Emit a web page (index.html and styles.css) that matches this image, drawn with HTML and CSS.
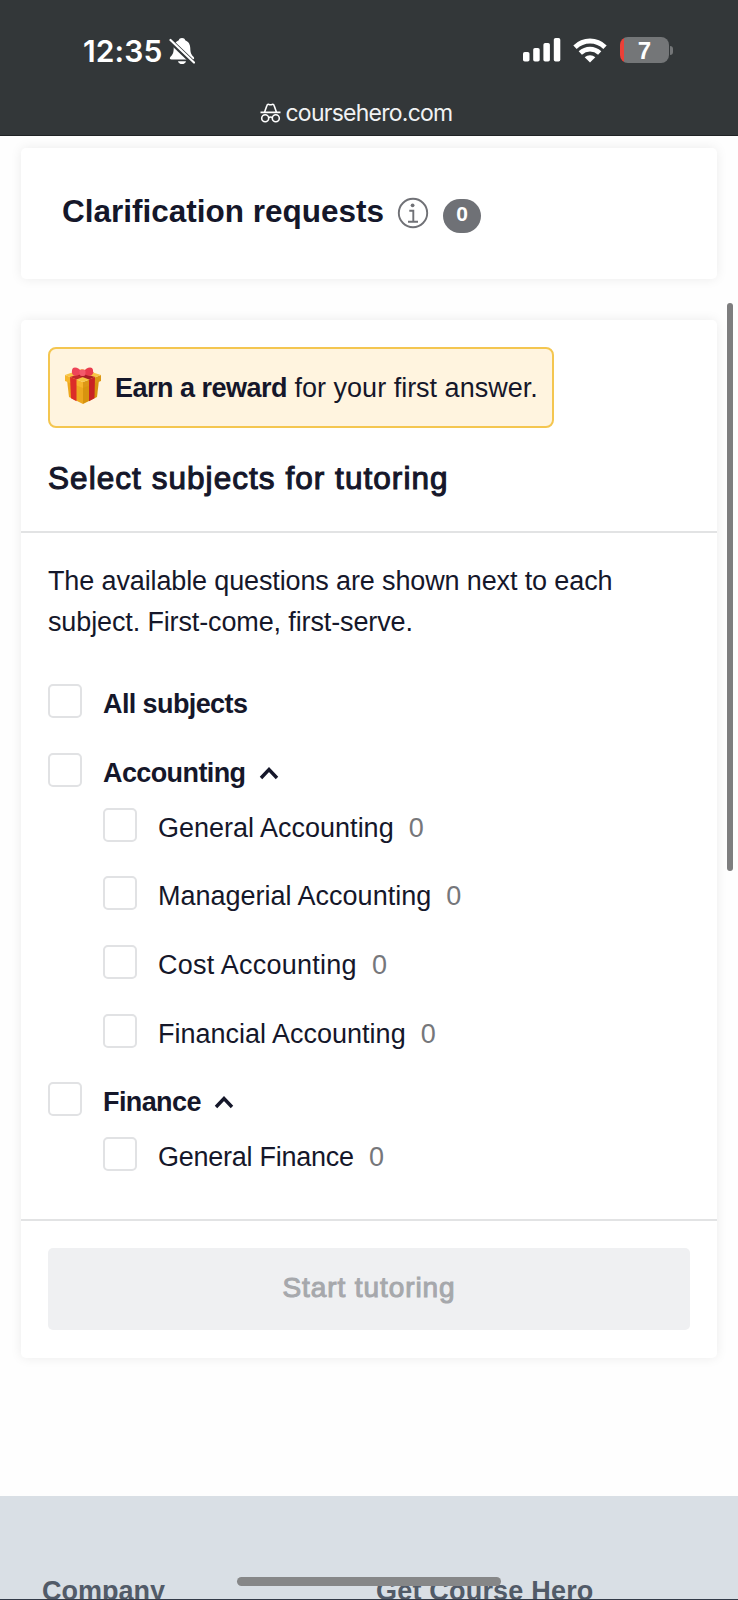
FILE: index.html
```html
<!DOCTYPE html>
<html lang="en">
<head>
    <meta charset="UTF-8">
    <meta name="viewport" content="width=device-width, initial-scale=1.0">
    <title>Course Hero - Tutoring</title>
    <link rel="stylesheet" href="styles.css">
</head>
<body>

<header class="browser-bar">
    <div class="status">
        <div class="status-left">
            <span class="time">12:35</span>
            <svg class="bell" width="26" height="28" viewBox="0 0 26 28">
                <path d="M13 1c-1.700 0-2.900.9-3.200 2.300C6 4.800 4.800 7.800 4.700 11.500c-.1 4.300-1 6-3.200 8.300-1.200 1.300-.7 2.800 1 2.800h21c1.700 0 2.200-1.500 1-2.800-2.200-2.300-3.100-4-3.200-8.300-.1-3.700-1.300-6.700-5.100-8.200C15.900 1.900 14.700 1 13 1z" fill="#fff"/>
                <path d="M9 24.200h8c-.4 1.700-2 2.900-4 2.900s-3.600-1.200-4-2.900z" fill="#fff"/>
                <path d="M1 3.500l24 23" stroke="#333739" stroke-width="5"/>
                <path d="M1.500 3l23.500 22.500" stroke="#fff" stroke-width="2.200" stroke-linecap="round"/>
            </svg>
        </div>
        <div class="status-right">
            <svg width="38" height="24" viewBox="0 0 38 24" fill="#fff">
                <rect x="0" y="14" width="6.500" height="9.500" rx="1.800"/>
                <rect x="10.200" y="10" width="6.500" height="13.500" rx="1.800"/>
                <rect x="20.400" y="5" width="6.500" height="18.500" rx="1.800"/>
                <rect x="30.800" y="0" width="6.500" height="23.500" rx="1.800"/>
            </svg>
            <svg class="wifi" width="34" height="25" viewBox="0 0 34 25">
                <path d="M2 9.200C10.500.9 23.500.9 32 9.200" fill="none" stroke="#fff" stroke-width="4.800"/>
                <path d="M7.300 15C13 9.800 21 9.800 26.700 15" fill="none" stroke="#fff" stroke-width="4.800"/>
                <path d="M17 24.500l-5.300-5.300c3-2.700 7.600-2.700 10.600 0z" fill="#fff"/>
            </svg>
            <div class="battery"><span>7</span></div>
            <div class="battery-tip"></div>
        </div>
    </div>
    <div class="address">
        <svg width="21" height="20" viewBox="0 0 21 20" fill="none" stroke="#fff" stroke-width="1.600">
            <path d="M4.600 9L7 2.300c.3-.9 1-1.200 1.900-.9 1.100.4 2.100.4 3.200 0 .9-.3 1.600 0 1.900.9L16.400 9M.5 9.400h20"/>
            <circle cx="5.200" cy="15.200" r="3.500"/>
            <circle cx="15.800" cy="15.200" r="3.500"/>
            <path d="M8.600 14.600c1.200-.8 2.600-.8 3.800 0"/>
        </svg>
        <span>coursehero.com</span>
    </div>
</header>

<main>
    <section class="card requests">
        <h2>Clarification requests</h2>
        <svg class="info" width="32" height="32" viewBox="0 0 32 32" fill="none" stroke="#707176" stroke-width="1.900">
            <circle cx="16" cy="16" r="14.200"/>
            <path d="M12.300 13.800h4V24.600M11 24.700h10"/>
            <circle cx="15.600" cy="8.300" r="1.900" fill="#707176" stroke="none"/>
        </svg>
        <span class="count">0</span>
    </section>

    <section class="card">
        <div class="card-head">
            <div class="reward">
                <svg width="38" height="40" viewBox="0 0 38 40">
                    <path d="M3 14l16 6v18L5 31z" fill="#eda81f"/>
                    <path d="M35 14l-16 6v18l14-7z" fill="#d8930f"/>
                    <path d="M1 9l18 7v6L1 15z" fill="#f6b52c"/>
                    <path d="M37 9l-18 7v6l18-7z" fill="#dc9716"/>
                    <path d="M1 9l17-6 19 6-18 7z" fill="#f8c544"/>
                    <path d="M6 11l19-6 5 1.800-17.500 6.700z" fill="#c3282b"/>
                    <path d="M31 11L12 5.500 8 7l17 6.500z" fill="#aa1f25"/>
                    <path d="M6 11l6.500 2.500V35.200L7 32.300z" fill="#dc2d28"/>
                    <path d="M31 11l-6 2.500V35.200l5.500-2.900z" fill="#c82424"/>
                    <path d="M18 7c-2-5-7-6.500-9-5-1.500 1.500-1.500 5.500 0 7 2.500 1.500 6 .5 9-2z" fill="#ee4458"/>
                    <path d="M19 7c2-5 7-6.500 9-5 1.500 1.500 1.500 5.500 0 7-2.500 1.500-6 .5-9-2z" fill="#e93a4d"/>
                    <rect x="15.500" y="3.500" width="6" height="6.500" rx="2" fill="#f3596a"/>
                </svg>
                <p><b>Earn a reward</b> for your first answer.</p>
            </div>
            <h3>Select subjects for tutoring</h3>
        </div>

        <div class="card-body">
            <p class="hint">The available questions are shown next to each subject. First-come, first-serve.</p>

            <div class="row">
                <span class="checkbox"></span>
                <b>All subjects</b>
            </div>

            <div class="row group">
                <span class="checkbox"></span>
                <b>Accounting</b>
                <svg class="caret" width="20" height="14" viewBox="0 0 20 14"><path d="M2 12l8-8.500 8 8.500" fill="none" stroke="#15172a" stroke-width="3.400"/></svg>
            </div>
            <div class="row sub">
                <span class="checkbox"></span>
                <span class="label">General Accounting</span>
                <span class="num">0</span>
            </div>
            <div class="row sub">
                <span class="checkbox"></span>
                <span class="label">Managerial Accounting</span>
                <span class="num">0</span>
            </div>
            <div class="row sub">
                <span class="checkbox"></span>
                <span class="label cost">Cost Accounting</span>
                <span class="num">0</span>
            </div>
            <div class="row sub">
                <span class="checkbox"></span>
                <span class="label">Financial Accounting</span>
                <span class="num">0</span>
            </div>

            <div class="row group">
                <span class="checkbox"></span>
                <b>Finance</b>
                <svg class="caret" width="20" height="14" viewBox="0 0 20 14"><path d="M2 12l8-8.500 8 8.500" fill="none" stroke="#15172a" stroke-width="3.400"/></svg>
            </div>
            <div class="row sub">
                <span class="checkbox"></span>
                <span class="label finance">General Finance</span>
                <span class="num">0</span>
            </div>
        </div>

        <div class="card-foot">
            <button class="button" disabled>Start tutoring</button>
        </div>
    </section>
</main>

<footer>
    <div>Company</div>
    <div class="get">Get Course Hero</div>
</footer>

<div class="scrollbar"></div>
<div class="home-indicator"></div>

</body>
</html>
```

FILE: styles.css
```css
* {
    margin: 0;
    padding: 0;
    box-sizing: border-box;
}

body {
    position: relative;
    width: 738px;
    height: 1600px;
    overflow: hidden;
    background: #fefefe;
    color: #15172a;
    font-family: "Liberation Sans", Arial, sans-serif;
    font-size: 27px;
    display: flex;
    flex-direction: column;
}

svg {
    display: block;
    flex-shrink: 0;
}

/* browser bar */
.browser-bar {
    height: 136px;
    flex-shrink: 0;
    background: #333739;
    border-bottom: 1px solid #202325;
    color: #fff;
    font-family: Inter, sans-serif;
}

.status {
    height: 100px;
    display: flex;
    justify-content: space-between;
    padding: 0 65px 0 83px;
}

.status-left,
.status-right {
    display: flex;
    align-items: center;
}

.time {
    padding-top: 1px;
    font-size: 30px;
    font-weight: 600;
    letter-spacing: 0.1px;
}

.bell {
    margin: 1px 0 0 7px;
}

.wifi {
    margin: 0 13px 0 12px;
}

.battery {
    width: 49px;
    height: 26px;
    border-radius: 8px;
    background: linear-gradient(to right, #eb4038 4px, #747678 4px);
    font-family: "Liberation Sans", Arial, sans-serif;
    font-size: 24px;
    font-weight: 700;
    line-height: 27px;
    text-align: center;
}

.battery-tip {
    width: 3px;
    height: 9px;
    margin-left: 1px;
    border-radius: 0 4px 4px 0;
    background: #747678;
}

.address {
    display: flex;
    justify-content: center;
    align-items: center;
    gap: 4px;
    height: 26px;
    padding-right: 25px;
    font-size: 23px;
    letter-spacing: -0.75px;
    color: #f1f2f3;
}

/* cards */
main {
    padding: 12px 21px 0;
    height: 1360px;
    flex-shrink: 0;
}

.card {
    background: #fff;
    border-radius: 5px;
    box-shadow: 0 0 12px rgba(0, 0, 0, 0.08);
}

.requests {
    height: 131px;
    margin-bottom: 41px;
    padding: 0 41px;
    display: flex;
    align-items: center;
}

h2 {
    font-size: 31.5px;
    line-height: 36px;
    margin-bottom: 6px;
}

.info {
    margin: 0 0 2px 13px;
}

.count {
    width: 38px;
    height: 34px;
    margin: 5px 0 0 14px;
    border-radius: 17px;
    background: #6f7176;
    color: #fff;
    font-size: 21px;
    font-weight: bold;
    line-height: 30px;
    text-align: center;
}

.card-head {
    height: 213px;
    padding: 27px 27px 0;
    border-bottom: 2px solid #e2e3e4;
}

.reward {
    display: flex;
    align-items: center;
    width: 506px;
    height: 81px;
    padding-left: 14px;
    border: 2px solid #f4c650;
    border-radius: 8px;
    background: #fff4df;
}

.reward svg {
    margin-bottom: 4px;
}

.reward p {
    margin: 2px 0 0 13px;
    white-space: nowrap;
}

b {
    letter-spacing: -0.5px;
}

/* medium weight: regular face thickened with a stroke */
h3 {
    margin-top: 33px;
    font-size: 31.5px;
    font-weight: normal;
    line-height: 34px;
    letter-spacing: 1.05px;
    -webkit-text-stroke: 1.1px #15172a;
}

.card-body {
    height: 688px;
    padding: 28px 27px 0;
    border-bottom: 2px solid #e2e3e4;
}

.hint {
    margin-bottom: 41px;
    line-height: 41px;
    letter-spacing: -0.13px;
}

.row {
    display: flex;
    height: 34px;
    margin-bottom: 34.7px;
    line-height: 34px;
}

.group {
    margin-bottom: 21px;
}

.sub {
    padding-left: 55px;
}

.checkbox {
    width: 34px;
    height: 34px;
    margin-right: 21px;
    border: 2px solid #e1e2e4;
    border-radius: 5px;
}

.row b,
.label,
.num {
    padding-top: 3px;
}

.row b {
    letter-spacing: -0.6px;
}

.cost {
    letter-spacing: 0.25px;
}

.finance {
    letter-spacing: -0.25px;
}

.num {
    margin-left: 15px;
    color: #76777b;
}

.caret {
    margin: 13px 0 0 13px;
}

.card-foot {
    height: 137px;
    padding: 27px;
}

.button {
    width: 100%;
    height: 82px;
    padding-bottom: 2px;
    border: none;
    border-radius: 5px;
    background: #eff0f2;
    color: #a6a8ac;
    font-family: inherit;
    font-size: 28px;
    letter-spacing: 0.9px;
    -webkit-text-stroke: 1px #a6a8ac;
}

/* footer */
footer {
    display: flex;
    height: 104px;
    flex-shrink: 0;
    padding: 80px 42px 0;
    overflow: hidden;
    background: #d9dfe5;
    border-bottom: 1px solid #333b48;
    color: #525b68;
    font-weight: bold;
    line-height: 31px;
}

footer div {
    width: 334px;
    flex-shrink: 0;
}

.get {
    letter-spacing: 0.2px;
}

/* overlays */
.scrollbar {
    position: absolute;
    top: 303px;
    right: 5px;
    width: 6px;
    height: 568px;
    border-radius: 3px;
    background: #7e7e7f;
}

.home-indicator {
    position: absolute;
    left: 237px;
    bottom: 14px;
    width: 264px;
    height: 9px;
    border-radius: 5px;
    background: #868788;
}
```
